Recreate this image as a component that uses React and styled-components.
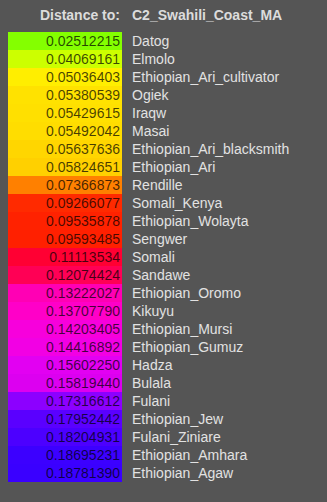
import React from 'react'
import styled, { createGlobalStyle } from 'styled-components'

const GlobalStyle = createGlobalStyle`
  html, body {
    margin: 0;
    padding: 0;
    background: #555555;
  }
  body {
    font-family: 'Liberation Sans', Arial, sans-serif;
  }
`

const rows = [
  ['0.02512215', 'Datog', '#84ff00'],
  ['0.04069161', 'Elmolo', '#ccff00'],
  ['0.05036403', 'Ethiopian_Ari_cultivator', '#ffee00'],
  ['0.05380539', 'Ogiek', '#ffe200'],
  ['0.05429615', 'Iraqw', '#ffe000'],
  ['0.05492042', 'Masai', '#ffdd00'],
  ['0.05637636', 'Ethiopian_Ari_blacksmith', '#ffd600'],
  ['0.05824651', 'Ethiopian_Ari', '#ffd000'],
  ['0.07366873', 'Rendille', '#ff8000'],
  ['0.09266077', 'Somali_Kenya', '#ff2a00'],
  ['0.09535878', 'Ethiopian_Wolayta', '#ff2200'],
  ['0.09593485', 'Sengwer', '#ff2000'],
  ['0.11113534', 'Somali', '#ff0033'],
  ['0.12074424', 'Sandawe', '#ff0055'],
  ['0.13222027', 'Ethiopian_Oromo', '#ff00b4'],
  ['0.13707790', 'Kikuyu', '#ff00c8'],
  ['0.14203405', 'Ethiopian_Mursi', '#f700dc'],
  ['0.14416892', 'Ethiopian_Gumuz', '#f200e4'],
  ['0.15602250', 'Hadza', '#e200f2'],
  ['0.15819440', 'Bulala', '#dc00f0'],
  ['0.17316612', 'Fulani', '#8c00ff'],
  ['0.17952442', 'Ethiopian_Jew', '#5a00ff'],
  ['0.18204931', 'Fulani_Ziniare', '#4c00ff'],
  ['0.18695231', 'Ethiopian_Amhara', '#3c00ff'],
  ['0.18781390', 'Ethiopian_Agaw', '#3a00ff'],
]

const Panel = styled.div`
  padding: 0 8px;
  display: grid;
  grid-template-columns: 114px auto;
  column-gap: 10px;
  font-size: 14px;
  color: #e2e2e2;
`

const HeadCell = styled.div`
  height: 32px;
  line-height: 30px;
  font-weight: bold;
  color: #dcdcdc;
  text-align: ${p => (p.$right ? 'right' : 'left')};
  padding-right: ${p => (p.$right ? '2px' : '0')};
`

const Value = styled.div`
  height: 18px;
  line-height: 18px;
  text-align: right;
  padding-right: 2px;
  background: ${p => p.$color};
  color: rgba(0, 0, 0, 0.72);
`

const Name = styled.div`
  height: 18px;
  line-height: 18px;
  white-space: nowrap;
`

const App = () => (
  <>
    <GlobalStyle />
    <Panel>
      <HeadCell $right>Distance to:</HeadCell>
      <HeadCell>C2_Swahili_Coast_MA</HeadCell>
      {rows.map(([value, name, color]) => (
        <React.Fragment key={name}>
          <Value $color={color}>{value}</Value>
          <Name>{name}</Name>
        </React.Fragment>
      ))}
    </Panel>
  </>
)

export default App
